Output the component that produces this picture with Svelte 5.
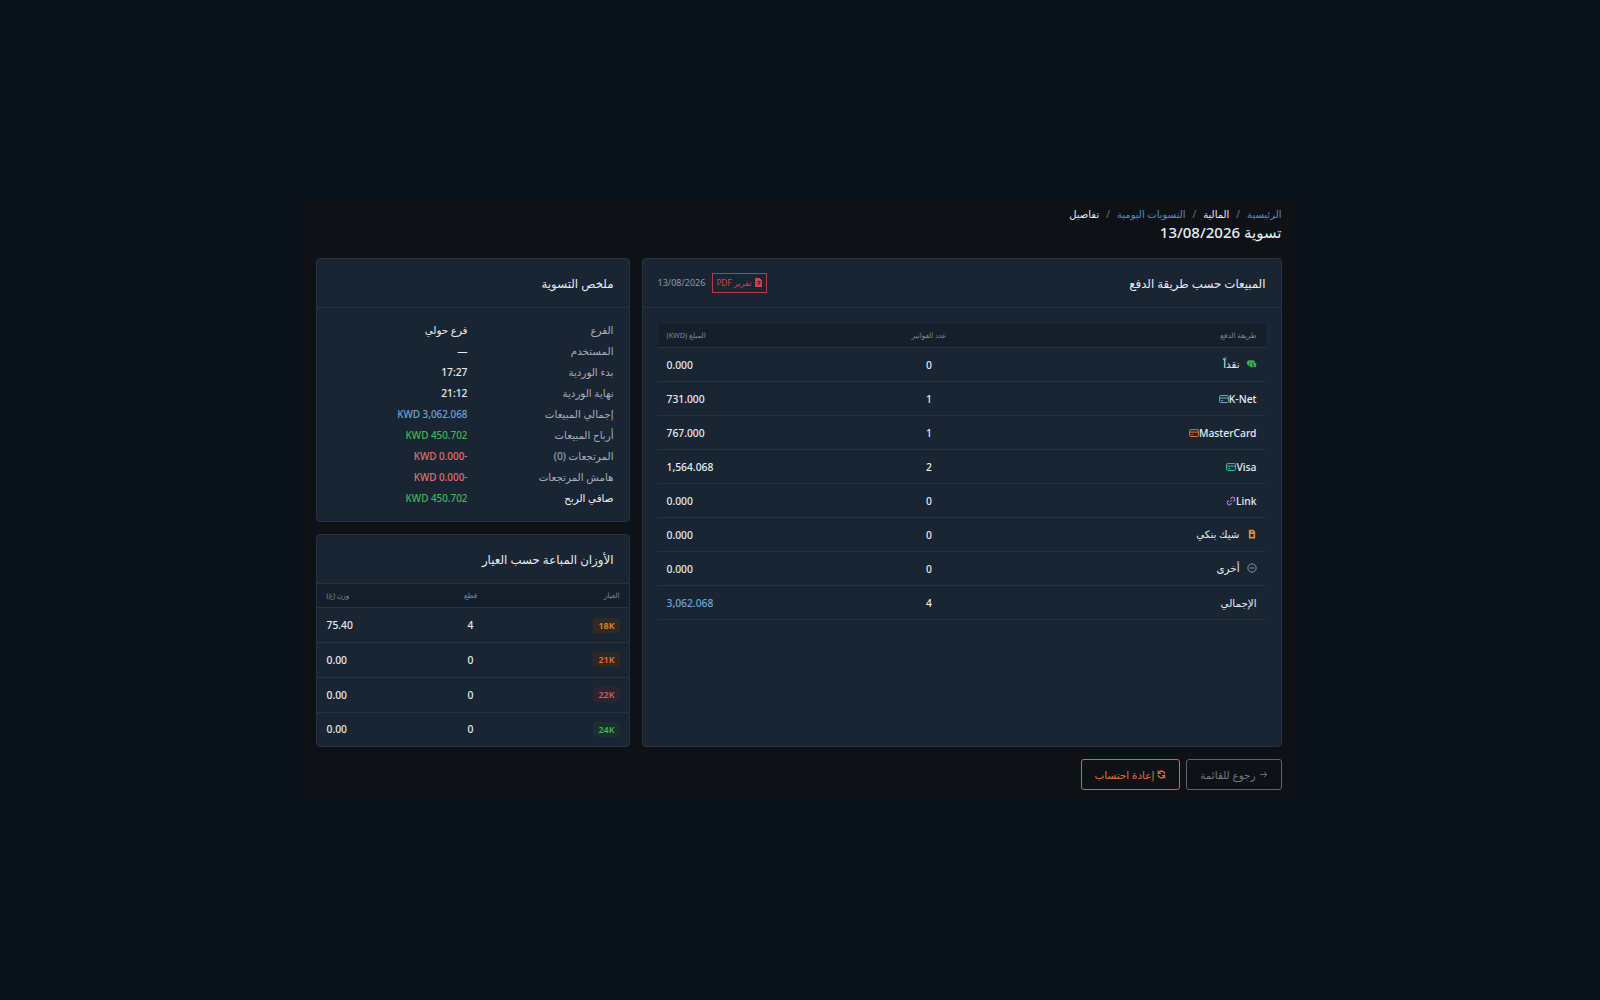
<script>
  const crumbs = [
    { label: 'الرئيسية', link: true },
    { label: 'المالية', link: false },
    { label: 'التسويات اليومية', link: true },
    { label: 'تفاصيل', link: false }
  ];

  // latin names sit before the icon in the rtl flow, arabic ones after it
  const payments = [
    { name: 'نقداً', icon: 'cash', color: '#3fb950', count: 0, amount: '0.000', arabic: true },
    { name: 'K-Net', icon: 'card', color: '#6ea8e0', count: 1, amount: '731.000' },
    { name: 'MasterCard', icon: 'card', color: '#e8703a', count: 1, amount: '767.000' },
    { name: 'Visa', icon: 'card', color: '#3dbf9a', count: 2, amount: '1,564.068' },
    { name: 'Link', icon: 'link', color: '#a96fd0', count: 0, amount: '0.000' },
    { name: 'شيك بنكي', icon: 'file', color: '#e3902a', count: 0, amount: '0.000', arabic: true },
    { name: 'أخرى', icon: 'minus', color: '#8b98a8', count: 0, amount: '0.000', arabic: true }
  ];

  const summary = [
    { label: 'الفرع', value: 'فرع حولي', tone: 'plain' },
    { label: 'المستخدم', value: '—', tone: 'plain' },
    { label: 'بدء الوردية', value: '17:27', tone: 'plain' },
    { label: 'نهاية الوردية', value: '21:12', tone: 'plain' },
    { label: 'إجمالي المبيعات', value: 'KWD 3,062.068', tone: 'blue' },
    { label: 'أرباح المبيعات', value: 'KWD 450.702', tone: 'green' },
    { label: 'المرتجعات (0)', value: '-KWD 0.000', tone: 'red' },
    { label: 'هامش المرتجعات', value: '-KWD 0.000', tone: 'red' },
    { label: 'صافي الربح', value: 'KWD 450.702', tone: 'green', strong: true }
  ];

  const weights = [
    { karat: '18K', cls: 'k18', pieces: 4, weight: '75.40' },
    { karat: '21K', cls: 'k21', pieces: 0, weight: '0.00' },
    { karat: '22K', cls: 'k22', pieces: 0, weight: '0.00' },
    { karat: '24K', cls: 'k24', pieces: 0, weight: '0.00' }
  ];
</script>

{#snippet payIcon(kind, color)}
  <svg class="pay-icon" viewBox="0 0 16 16" fill="none" stroke={color} stroke-width="1.6" aria-hidden="true">
    {#if kind === 'cash'}
      <rect x="1" y="3" width="11" height="7" rx="1.5" fill={color} />
      <rect x="4" y="6" width="11" height="7" rx="1.5" fill={color} stroke="#1a2533" stroke-width="0.8" />
      <circle cx="9.5" cy="9.5" r="1.4" fill="#1a2533" stroke="none" />
    {:else if kind === 'card'}
      <rect x="1" y="2.5" width="14" height="11" rx="1.5" />
      <path d="M1 6.5h14M3.5 10.5h3" />
    {:else if kind === 'link'}
      <path d="M6 10l4-4" />
      <path d="M7 4.5l1.5-1.5a3 3 0 0 1 4.5 4.5L11.5 9" stroke-width="2" />
      <path d="M9 11.5L7.5 13A3 3 0 0 1 3 8.5L4.5 7" stroke-width="2" />
    {:else if kind === 'file'}
      <path d="M3 1h7l3 3v11H3z" fill={color} stroke="none" />
      <rect x="5.5" y="8" width="5" height="4.5" fill="#1a2533" stroke="none" />
      <rect x="6.5" y="3.5" width="2.5" height="2" fill="#1a2533" stroke="none" />
    {:else}
      <circle cx="8" cy="8" r="6.6" />
      <path d="M4.5 8h7" />
    {/if}
  </svg>
{/snippet}

<div class="page" dir="rtl">
  <main class="panel">
    <nav class="breadcrumb">
      {#each crumbs as crumb, i}
        {#if i > 0}<span class="sep">/</span>{/if}
        <span class:link={crumb.link}>{crumb.label}</span>
      {/each}
    </nav>
    <h1>تسوية 13/08/2026</h1>

    <div class="columns">
      <section class="card sales">
        <header class="card-head">
          <h2>المبيعات حسب طريقة الدفع</h2>
          <div class="head-tools">
            <span class="pdf">
              <svg viewBox="0 0 16 16" aria-hidden="true">
                <path d="M2 0h8l4 4v12H2z" fill="#d9434e" />
                <path d="M5.5 6h5v3.5H7.5V13" fill="none" stroke="#1a2533" stroke-width="1.6" />
              </svg>
              تقرير PDF
            </span>
            <span class="date">13/08/2026</span>
          </div>
        </header>
        <div class="card-body">
          <table class="pay-table">
            <thead>
              <tr><th>طريقة الدفع</th><th class="count">عدد الفواتير</th><th class="amount">المبلغ (KWD)</th></tr>
            </thead>
            <tbody>
              {#each payments as p}
                <tr>
                  <td>
                    <span class="method" class:arabic={p.arabic}>
                      {@render payIcon(p.icon, p.color)}
                      <span>{p.name}</span>
                    </span>
                  </td>
                  <td class="count">{p.count}</td>
                  <td class="amount"><bdi>{p.amount}</bdi></td>
                </tr>
              {/each}
              <tr>
                <td>الإجمالي</td>
                <td class="count">4</td>
                <td class="amount blue"><bdi>3,062.068</bdi></td>
              </tr>
            </tbody>
          </table>
        </div>
      </section>

      <div class="side">
        <section class="card">
          <header class="card-head">
            <h2>ملخص التسوية</h2>
          </header>
          <dl class="summary">
            {#each summary as row}
              <dt class:strong={row.strong}>{row.label}</dt>
              <dd class={row.tone}>{row.value}</dd>
            {/each}
          </dl>
        </section>

        <section class="card grow">
          <header class="card-head">
            <h2>الأوزان المباعة حسب العيار</h2>
          </header>
          <table class="weight-table">
            <thead>
              <tr><th class="karat-col">العيار</th><th class="pieces">قطع</th><th class="weight">وزن (غ)</th></tr>
            </thead>
            <tbody>
              {#each weights as w}
                <tr>
                  <td class="karat-col"><span class="karat {w.cls}">{w.karat}</span></td>
                  <td class="pieces">{w.pieces}</td>
                  <td class="weight">{w.weight}</td>
                </tr>
              {/each}
            </tbody>
          </table>
        </section>
      </div>
    </div>

    <footer class="actions">
      <button type="button" class="btn back">
        <svg viewBox="0 0 16 16" fill="none" stroke="currentColor" stroke-width="1.5" aria-hidden="true"><path d="M2 8h12M9 3.5l5 4.5-5 4.5" /></svg>
        رجوع للقائمة
      </button>
      <button type="button" class="btn recalc">
        <svg viewBox="0 0 16 16" fill="none" stroke="currentColor" stroke-width="2.4" aria-hidden="true"><path d="M14 7A6 6 0 0 0 3.2 4.4M2 9a6 6 0 0 0 10.8 2.6" /><path d="M2 1v5h5M14 15v-5H9" stroke-width="1.8" /></svg>
        إعادة احتساب
      </button>
    </footer>
  </main>
</div>

<style>
  :global(body) {
    background: #081019;
  }

  .page {
    min-height: 1000px;
    display: flex;
    justify-content: center;
    align-items: center;
    font-family: "Noto Sans", "DejaVu Sans", sans-serif;
    color: #e6edf3;
  }

  .panel {
    box-sizing: border-box;
    width: 995px;
    padding: 6px 16px 10px 13px;
    background: #0e1216;
  }

  .breadcrumb {
    display: flex;
    gap: 7px;
    font-size: 10px;
    line-height: 16px;
    color: #e6edf3;
  }

  .breadcrumb .link {
    color: #4f8fd6;
  }

  .sep {
    color: #6e7681;
  }

  h1 {
    margin: 0;
    font-size: 15px;
    line-height: 20px;
    font-weight: 500;
  }

  .columns {
    display: flex;
    gap: 12px;
    margin-top: 16px;
  }

  .card {
    background: #1a2533;
    border: 1px solid #243242;
    border-radius: 4px;
    overflow: hidden;
  }

  .sales {
    flex: 1;
  }

  .side {
    width: 314px;
    display: flex;
    flex-direction: column;
    gap: 12px;
  }

  .card-head {
    box-sizing: border-box;
    height: 49px;
    padding: 0 15px;
    display: flex;
    align-items: center;
    justify-content: space-between;
    border-bottom: 1px solid #243242;
  }

  h2 {
    margin: 0;
    font-size: 11.8px;
    font-weight: 500;
  }

  .head-tools {
    display: flex;
    align-items: center;
    gap: 7px;
  }

  .date {
    font-size: 9px;
    color: #8b98a8;
  }

  .pdf {
    display: flex;
    align-items: center;
    gap: 3px;
    height: 18px;
    padding: 0 3px;
    border: 1px solid #b93a45;
    color: #d9434e;
    font-size: 8.2px;
  }

  .pdf svg {
    width: 9px;
    height: 9px;
  }

  .card-body {
    padding: 16px 15px 15px;
  }

  table {
    width: 100%;
    border-collapse: collapse;
    table-layout: fixed;
  }

  th {
    box-sizing: border-box;
    font-size: 7.2px;
    font-weight: 400;
    color: #7d8a99;
    height: 24px;
    text-align: start;
    background: #151f2b;
    border-bottom: 1px solid #243242;
  }

  td {
    font-size: 10.3px;
    font-weight: 500;
    border-bottom: 1px solid #243242;
  }

  .pay-table th,
  .pay-table td {
    padding: 0 9px;
  }

  .pay-table td {
    height: 33px;
  }

  .pay-table .count {
    width: 161px;
    text-align: center;
  }

  .pay-table .amount {
    width: 191px;
    text-align: left;
  }

  .method {
    display: inline-flex;
    flex-direction: row-reverse;
    align-items: center;
    gap: 0;
  }

  .method.arabic {
    flex-direction: row;
    gap: 7px;
  }

  .pay-icon {
    width: 10px;
    height: 10px;
  }

  .blue {
    color: #6ea3dc;
  }

  .green {
    color: #3fb950;
  }

  .red {
    color: #e0706f;
  }

  .summary {
    margin: 0;
    padding: 12px 15px 12px;
    display: grid;
    grid-template-columns: 146px 1fr;
  }

  dt,
  dd {
    margin: 0;
    font-size: 10.3px;
    line-height: 21px;
  }

  dt {
    color: #a3afbd;
  }

  dt.strong {
    color: #f0f4f8;
  }

  dd {
    font-size: 9.9px;
    font-weight: 500;
  }

  dd.plain {
    font-size: 10.3px;
    color: #e6edf3;
  }

  .grow {
    flex: 1;
  }

  .weight-table th,
  .weight-table td {
    padding: 0 10px;
  }

  .weight-table td {
    height: 33.8px;
  }

  .weight-table tr:last-child td {
    border-bottom: none;
  }

  .weight-table .karat-col {
    width: 64px;
    padding-right: 9px;
  }

  .weight-table .pieces {
    text-align: center;
  }

  .weight-table .weight {
    width: 60px;
    text-align: left;
  }

  .karat {
    display: inline-block;
    padding: 0 5px;
    line-height: 15px;
    border-radius: 3px;
    font-size: 9px;
    font-weight: 600;
  }

  .k18 { color: #e3902a; background: #2f2a22; }
  .k21 { color: #e8703a; background: #2e2825; }
  .k22 { color: #c9606a; background: #2c2430; }
  .k24 { color: #3fb950; background: #1a3030; }

  .actions {
    display: flex;
    gap: 6px;
    margin-top: 12px;
  }

  .btn {
    display: flex;
    align-items: center;
    gap: 3px;
    height: 31px;
    padding: 0 13px;
    background: transparent;
    border-radius: 3px;
    font: inherit;
    font-size: 10.4px;
  }

  .btn svg {
    width: 9px;
    height: 9px;
  }

  .back {
    color: #6e7a88;
    border: 1px solid #5c6570;
  }

  .recalc {
    color: #e8703a;
    border: 1px solid #d9682e;
  }
</style>
